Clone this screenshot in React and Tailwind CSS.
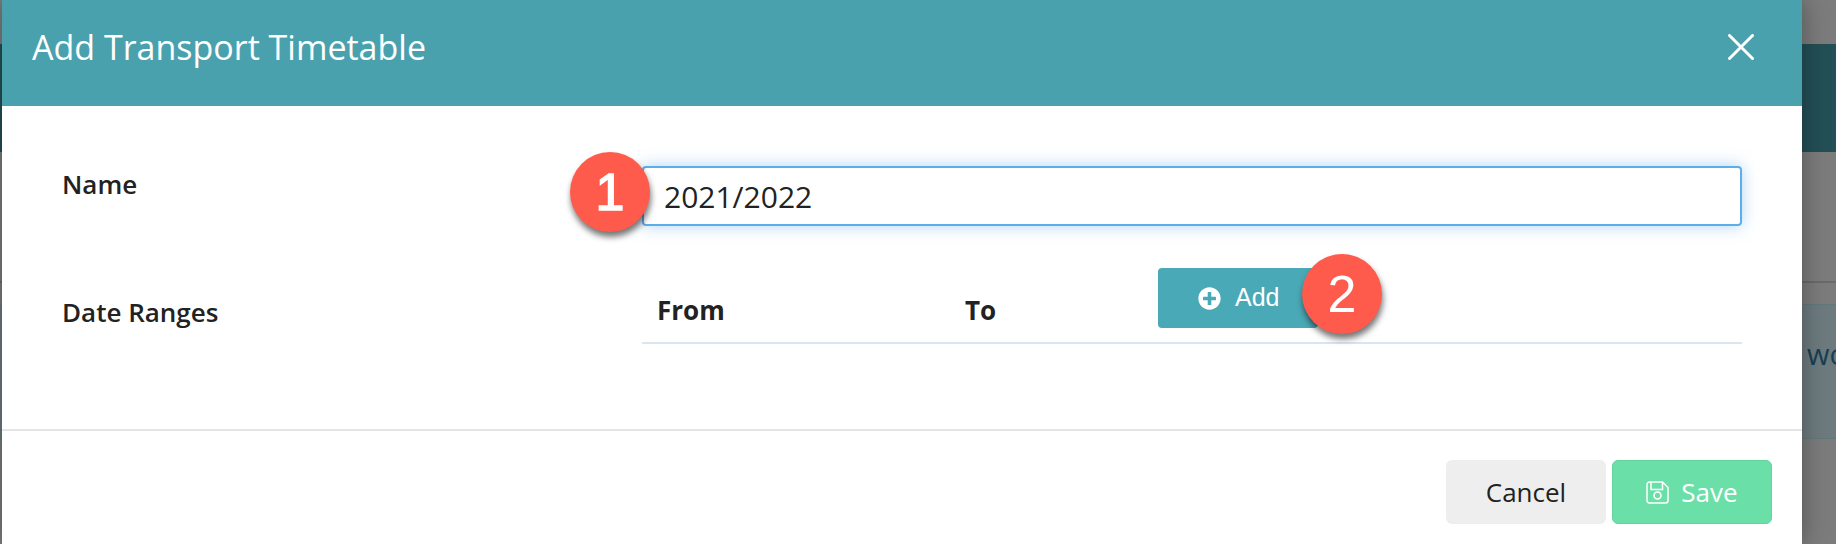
import React from 'react';
import { FaPlusCircle } from 'react-icons/fa';

function Badge({ n, className }) {
  return (
    <div className={`absolute w-[80px] h-[80px] rounded-full bg-[#ff5b4d] text-white flex items-center justify-center text-[52px] font-['Liberation_Sans',sans-serif] shadow-[1px_5px_6px_rgba(0,0,0,0.55)] ${className}`}>
      {n}
    </div>
  );
}

function Backdrop() {
  return (
    <div className="flex flex-col h-[544px] bg-[#7c7c7c]">
      <div className="h-[44px]"></div>
      <div className="h-[108px] bg-[#234f56]"></div>
      <div className="h-[131px] border-b-2 border-[#6a6a6a]"></div>
      <div className="h-[21px]"></div>
      <div className="h-[135px] bg-[#6d7b7f] border-y border-[#62797b] flex items-center justify-end text-[#173f52] text-[29px] font-['Open_Sans',sans-serif] pb-[36px]">
        <span className="w-[29px] overflow-hidden">wo</span>
      </div>
    </div>
  );
}

export default function App() {
  return (
    <div className="relative w-[1836px] h-[544px] overflow-hidden font-['Open_Sans',sans-serif]">
      <Backdrop />
      <div className="absolute left-[2px] top-0 w-[1800px] h-[544px] bg-white flex flex-col shadow-[0_0_24px_rgba(0,0,0,0.35)]">
        <div className="h-[106px] bg-[#4aa1ae] flex items-center justify-between pl-[30px] pr-[48px] text-white">
          <h1 className="text-[34px] leading-none pb-[12px]">Add Transport Timetable</h1>
          <svg width="26" height="26" viewBox="0 0 26 26" stroke="currentColor" strokeWidth="3" strokeLinecap="round" className="mb-[12px]">
            <path d="M1.500 1.500l23 23M24.500 1.500l-23 23" />
          </svg>
        </div>

        <div className="h-[323px] pl-[60px] pr-[60px] pt-[60px] text-[#222]">
          <div className="flex">
            <label className="w-[580px] text-[26px] font-semibold leading-[33px] pt-[2px]">Name</label>
            <input
              readOnly
              value="2021/2022"
              className="flex-1 h-[60px] rounded-[4px] border-2 border-[#5dade8] px-[20px] text-[30px] text-[#222] outline-none shadow-[0_0_16px_rgba(93,173,232,0.5)]"
            />
          </div>
          <div className="flex mt-[42px]">
            <label className="w-[580px] text-[26px] font-semibold leading-[33px] pt-[28px]">Date Ranges</label>
            <div className="flex-1 h-[76px] border-b-2 border-[#d7e6f4] flex text-[26px] font-bold">
              <span className="w-[323px] pl-[15px] pt-[26px] leading-[33px]">From</span>
              <span className="w-[193px] pt-[26px] leading-[33px]">To</span>
              <button className="w-[160px] h-[60px] rounded-[4px] bg-[#4aa9b6] text-white flex items-center justify-start pl-[40px] gap-[14px] text-[25px] font-normal font-['Liberation_Sans',sans-serif]">
                <FaPlusCircle className="w-[23px] h-[23px]" />
                Add
              </button>
            </div>
          </div>
        </div>

        <div className="border-t-2 border-[#e5e5e5] flex justify-end gap-[6px] pt-[29px] pr-[30px]">
          <button className="w-[160px] h-[64px] rounded-[6px] bg-[#eeeeee] text-[#222] text-[26px]">Cancel</button>
          <button className="w-[160px] h-[64px] rounded-[6px] bg-[#6ae0a8] border border-[#63d49e] text-white text-[26px] flex items-center justify-center gap-[12px]">
            <svg width="23" height="23" viewBox="0 0 23 23" fill="none" stroke="currentColor" strokeWidth="1.500">
              <path d="M3.500 1H16.500L22 6.500V19.500A2.500 2.500 0 0 1 19.500 22H3.500A2.500 2.500 0 0 1 1 19.500V3.500A2.500 2.500 0 0 1 3.500 1Z" />
              <path d="M5 1V8.500H16.500V1" />
              <circle cx="11.500" cy="14.500" r="3.500" />
            </svg>
            Save
          </button>
        </div>
      </div>
      <Badge n="1" className="left-[570px] top-[152px] [-webkit-text-stroke:1.5px_white]" />
      <Badge n="2" className="left-[1302px] top-[254px]" />
    </div>
  );
}
